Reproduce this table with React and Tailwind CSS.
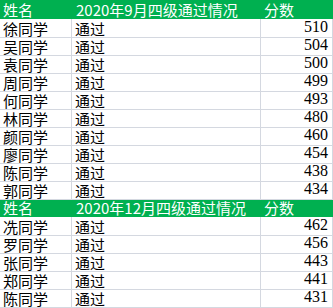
const groups = [
  {
    title: '2020年9月四级通过情况',
    headH: 'h-[19px]',
    rows: [
      ['徐同学', 510],
      ['吴同学', 504],
      ['袁同学', 500],
      ['周同学', 499],
      ['何同学', 493],
      ['林同学', 480],
      ['颜同学', 460],
      ['廖同学', 454],
      ['陈同学', 438],
      ['郭同学', 434],
    ],
  },
  {
    title: '2020年12月四级通过情况',
    headH: 'h-[18px]',
    rows: [
      ['冼同学', 462],
      ['罗同学', 456],
      ['张同学', 443],
      ['郑同学', 441],
      ['陈同学', 431],
    ],
  },
];

const cjk = "font-['Noto_Sans_CJK_SC',sans-serif]";

function HeadRow({ title, h }) {
  return (
    <div className={`grid grid-cols-[72px_189px_72px] bg-[#00b050] text-white text-[15px] leading-none ${h}`}>
      <div className="flex items-end pl-[3px] pb-[2px]">姓名</div>
      <div className="flex items-end pl-[4px] pb-[2px]">{title}</div>
      <div className="flex items-end pl-[3px] pb-[2px]">分数</div>
    </div>
  );
}

function DataRow({ name, score }) {
  return (
    <div className="grid grid-cols-[72px_189px_72px] h-[18px] text-[15px] leading-none text-black">
      <div className="flex items-end pl-[3px] pb-[1px] border-r border-b border-[#d4d8e0]">{name}</div>
      <div className="flex items-end pl-[3px] pb-[1px] border-r border-b border-[#d4d8e0]">通过</div>
      <div className="flex items-end justify-end pr-[4px] pb-[2px] border-r border-b border-[#d4d8e0] font-['Liberation_Serif',serif] text-[16px]">
        {score}
      </div>
    </div>
  );
}

export default function App() {
  return (
    <div className={`w-[333px] h-[308px] bg-white overflow-hidden ${cjk}`}>
      {groups.map((g) => (
        <div key={g.title}>
          <HeadRow title={g.title} h={g.headH} />
          {g.rows.map(([n, s]) => (
            <DataRow key={n + s} name={n} score={s} />
          ))}
        </div>
      ))}
    </div>
  );
}
